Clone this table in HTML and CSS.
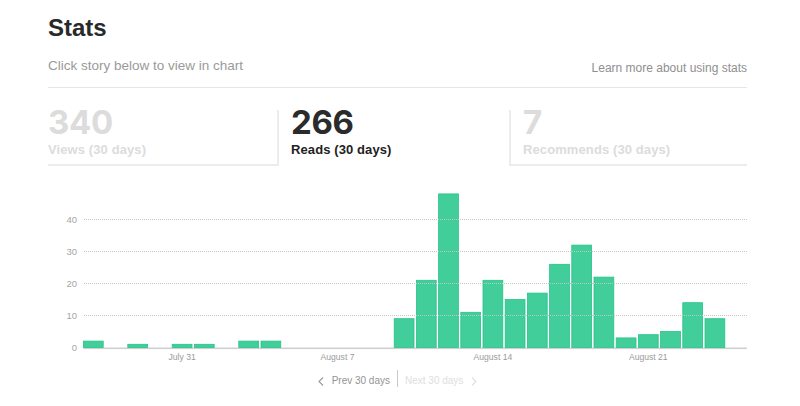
FILE: index.html
```html
<!DOCTYPE html>
<html lang="en">
<head>
<meta charset="utf-8">
<title>Stats</title>
<link rel="stylesheet" href="styles.css">
</head>
<body>
<main class="page">
  <h1 class="title">Stats</h1>
  <div class="head-row">
    <p class="subtitle">Click story below to view in chart</p>
    <a class="learn" href="#">Learn more about using stats</a>
  </div>

  <div class="tabs">
    <div class="tab tab-first">
      <div class="tab-num">340</div>
      <div class="tab-label">Views (30 days)</div>
    </div>
    <div class="tab tab-active">
      <div class="tab-num">266</div>
      <div class="tab-label">Reads (30 days)</div>
    </div>
    <div class="tab tab-last">
      <div class="tab-num">7</div>
      <div class="tab-label">Recommends (30 days)</div>
    </div>
  </div>

  <svg class="chart" width="699" height="186" viewBox="0 0 699 186">
    <rect class="axis" x="35.4" y="167.5" width="663.4" height="1.6"/>
    <g class="bars">
      <rect x="35.4" y="161.1" width="19.8" height="6.4"/>
      <rect x="79.8" y="164.3" width="19.8" height="3.2"/>
      <rect x="124.2" y="164.3" width="19.8" height="3.2"/>
      <rect x="146.4" y="164.3" width="19.8" height="3.2"/>
      <rect x="190.8" y="161.1" width="19.8" height="6.4"/>
      <rect x="213.0" y="161.1" width="19.8" height="6.4"/>
      <rect x="346.2" y="138.7" width="19.8" height="28.8"/>
      <rect x="368.4" y="100.3" width="19.8" height="67.2"/>
      <rect x="390.6" y="13.9" width="19.8" height="153.6"/>
      <rect x="412.8" y="132.3" width="19.8" height="35.2"/>
      <rect x="435.0" y="100.3" width="19.8" height="67.2"/>
      <rect x="457.2" y="119.5" width="19.8" height="48"/>
      <rect x="479.4" y="113.1" width="19.8" height="54.4"/>
      <rect x="501.6" y="84.3" width="19.8" height="83.2"/>
      <rect x="523.8" y="65.1" width="19.8" height="102.4"/>
      <rect x="546.0" y="97.1" width="19.8" height="70.4"/>
      <rect x="568.2" y="157.9" width="19.8" height="9.6"/>
      <rect x="590.4" y="154.7" width="19.8" height="12.8"/>
      <rect x="612.6" y="151.5" width="19.8" height="16"/>
      <rect x="634.8" y="122.7" width="19.8" height="44.8"/>
      <rect x="657.0" y="138.7" width="19.8" height="28.8"/>
    </g>
    <g class="grid">
      <line x1="36" y1="39.5" x2="699" y2="39.5"/>
      <line x1="36" y1="71.5" x2="699" y2="71.5"/>
      <line x1="36" y1="103.5" x2="699" y2="103.5"/>
      <line x1="36" y1="135.5" x2="699" y2="135.5"/>
    </g>
    <g class="ylabels">
      <text x="29" y="42.8">40</text>
      <text x="29" y="74.8">30</text>
      <text x="29" y="106.8">20</text>
      <text x="29" y="138.8">10</text>
      <text x="29" y="171">0</text>
    </g>
    <g class="xlabels">
      <text x="134.1" y="180">July 31</text>
      <text x="289.5" y="180">August 7</text>
      <text x="444.9" y="180">August 14</text>
      <text x="600.3" y="180">August 21</text>
    </g>
  </svg>

  <nav class="pager">
    <a class="pager-link pager-prev" href="#">
      <svg class="chev" width="6" height="9" viewBox="0 0 6 9"><polyline points="5,0.5 1,4.5 5,8.5"/></svg>
      <span>Prev 30 days</span>
    </a>
    <span class="pager-divider"></span>
    <span class="pager-link pager-next">
      <span>Next 30 days</span>
      <svg class="chev" width="6" height="9" viewBox="0 0 6 9"><polyline points="1,0.5 5,4.5 1,8.5"/></svg>
    </span>
  </nav>
</main>
</body>
</html>
```

FILE: styles.css
```css
* { box-sizing: border-box; }

html, body {
  margin: 0;
  padding: 0;
  background: #fff;
}

body {
  font-family: "Liberation Sans", Arial, sans-serif;
  color: #222;
}

.page {
  width: 699px;
  margin-left: 48px;
  padding-top: 14px;
}

.title {
  margin: 0;
  font-size: 24px;
  line-height: 28px;
  font-weight: bold;
  color: #292929;
}

.head-row {
  display: flex;
  justify-content: space-between;
  align-items: baseline;
  margin-top: 15px;
  padding-bottom: 12px;
  border-bottom: 1px solid #e6e6e6;
}

.subtitle {
  margin: 0;
  font-size: 13.5px;
  line-height: 18px;
  color: #9a9a9a;
}

.learn {
  font-size: 12px;
  line-height: 18px;
  color: #8f8f8f;
  text-decoration: none;
  position: relative;
  top: 1.5px;
}

.tabs {
  display: grid;
  grid-template-columns: 231px 230px 1fr;
  margin-top: 22px;
}

.tab {
  height: 56px;
  padding-left: 12px;
  color: #dcdcdc;
}

.tab-first {
  padding-left: 0;
  border-right: 2px solid #ececec;
  border-bottom: 2px solid #ececec;
}

.tab-last {
  border-left: 2px solid #ececec;
  border-bottom: 2px solid #ececec;
}

.tab-active {
  color: #2b2b2b;
}

.tab-num {
  font-family: Inter, "Liberation Sans", sans-serif;
  font-size: 33px;
  line-height: 24px;
  font-weight: bold;
  letter-spacing: -0.3px;
}

.tab-label {
  margin-top: 8px;
  font-size: 13px;
  line-height: 16px;
  font-weight: bold;
  letter-spacing: 0.1px;
}

.tab-active .tab-label {
  color: #222;
}

.chart {
  display: block;
  margin-top: 14px;
  overflow: visible;
}

.axis {
  fill: #cfcfcf;
}

.bars rect {
  fill: #3ccc97;
  fill-opacity: 0.97;
  stroke: #25c489;
  stroke-width: 0.8;
}

.grid line {
  stroke: #c6c6c6;
  stroke-width: 1;
  stroke-dasharray: 1 1;
  shape-rendering: crispEdges;
}

.ylabels text {
  font-family: "Liberation Sans", Arial, sans-serif;
  font-size: 9.5px;
  fill: #a5a5a5;
  text-anchor: end;
}

.xlabels text {
  font-family: "Liberation Sans", Arial, sans-serif;
  font-size: 8.6px;
  fill: #9a9a9a;
  text-anchor: middle;
}

.pager {
  display: flex;
  justify-content: center;
  align-items: center;
  margin-top: 4px;
  height: 22px;
  font-size: 10px;
  line-height: 14px;
}

.pager-link {
  display: flex;
  align-items: center;
  gap: 8px;
  text-decoration: none;
}

.pager-prev {
  color: #949494;
}

.pager-next {
  color: #dedede;
}

.chev polyline {
  fill: none;
  stroke-width: 1.1;
}

.pager-prev .chev polyline { stroke: #9a9a9a; }
.pager-next .chev polyline { stroke: #e0e0e0; }

.pager-divider {
  width: 1px;
  height: 17px;
  margin: 0 7px 5px;
  background: #c9c9c9;
}
```
